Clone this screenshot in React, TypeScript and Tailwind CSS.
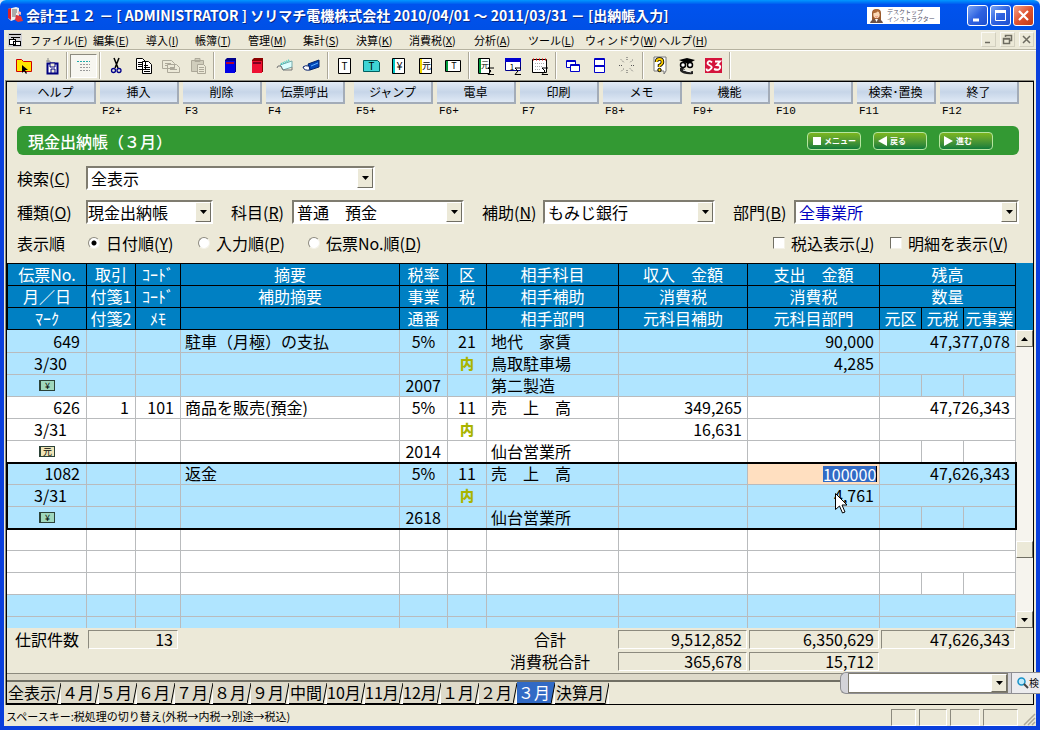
import { Fragment, type ReactNode } from "react";
import clsx from "clsx";

interface MenuEntry {
  label: string;
  accessKey: string;
  width: string;
}

interface Entry {
  no: string;
  date: string;
  mark: string;
  tag?: string;
  code?: string;
  summary: string;
  serial: string;
  kubun: string;
  account: string;
  subAccount?: string;
  department: string;
  income?: string;
  incomeTax?: string;
  expense?: string;
  expenseTax?: string;
  balance: string;
  tinted?: boolean;
  editing?: boolean;
}

const menus: MenuEntry[] = [
  { label: "ファイル", accessKey: "F", width: "w-[63px]" },
  { label: "編集", accessKey: "E", width: "w-[53px]" },
  { label: "導入", accessKey: "I", width: "w-[49px]" },
  { label: "帳簿", accessKey: "T", width: "w-[53px]" },
  { label: "管理", accessKey: "M", width: "w-[55px]" },
  { label: "集計", accessKey: "S", width: "w-[53px]" },
  { label: "決算", accessKey: "K", width: "w-[53px]" },
  { label: "消費税", accessKey: "X", width: "w-[65px]" },
  { label: "分析", accessKey: "A", width: "w-[54px]" },
  { label: "ツール", accessKey: "L", width: "w-[57px]" },
  { label: "ウィンドウ", accessKey: "W", width: "w-[74px]" },
  { label: "ヘルプ", accessKey: "H", width: "w-[53px]" },
];

const functionKeys = [
  [
    ["ヘルプ", "F1"],
    ["挿入", "F2+"],
    ["削除", "F3"],
    ["伝票呼出", "F4"],
  ],
  [
    ["ジャンプ", "F5+"],
    ["電卓", "F6+"],
    ["印刷", "F7"],
    ["メモ", "F8+"],
  ],
  [
    ["機能", "F9+"],
    ["", "F10"],
    ["検索･置換", "F11"],
    ["終了", "F12"],
  ],
];

const entries: Entry[] = [
  {
    no: "649",
    date: "3/30",
    mark: "¥",
    summary: "駐車（月極）の支払",
    serial: "2007",
    kubun: "21",
    account: "地代　家賃",
    subAccount: "鳥取駐車場",
    department: "第二製造",
    expense: "90,000",
    expenseTax: "4,285",
    balance: "47,377,078",
    tinted: true,
  },
  {
    no: "626",
    date: "3/31",
    mark: "元",
    tag: "1",
    code: "101",
    summary: "商品を販売(預金)",
    serial: "2014",
    kubun: "11",
    account: "売　上　高",
    department: "仙台営業所",
    income: "349,265",
    incomeTax: "16,631",
    balance: "47,726,343",
  },
  {
    no: "1082",
    date: "3/31",
    mark: "¥",
    summary: "返金",
    serial: "2618",
    kubun: "11",
    account: "売　上　高",
    department: "仙台営業所",
    expense: "100000",
    expenseTax: "4,761",
    balance: "47,626,343",
    tinted: true,
    editing: true,
  },
];

const months = [
  "全表示", "４月", "５月", "６月", "７月", "８月", "９月", "中間",
  "10月", "11月", "12月", "１月", "２月", "３月", "決算月",
];

const raised =
  "border border-t-white border-l-white border-r-[#716f64] border-b-[#716f64] bg-[#ece9d8]";
const sunken =
  "border border-t-[#8c8a7e] border-l-[#8c8a7e] border-r-white border-b-white";

/* ---------- title bar ---------- */

const CaptionButton = ({ label, close, children }: { label: string; close?: boolean; children: ReactNode }) => (
  <button
    aria-label={label}
    className={clsx(
      "flex h-[21px] w-[21px] items-center justify-center rounded-[3px] border border-white",
      close
        ? "bg-linear-to-br from-[#f0a088] via-[#e0532f] to-[#c03a14]"
        : "bg-linear-to-br from-[#7ba4f4] via-[#2f62e0] to-[#1c4fd0]",
    )}
  >
    <svg width="15" height="15" viewBox="0 0 15 15" stroke="#fff" fill="none">
      {children}
    </svg>
  </button>
);

const TitleBar = () => (
  <header className="flex h-[30px] items-center gap-[2px] rounded-t-md bg-linear-to-b from-[#0997ff] via-[#0053ee] via-15% to-[#0050e6] pl-[7px] pr-[6px]">
    <svg width="16" height="16" viewBox="0 0 16 16" aria-hidden="true">
      <path d="M1 2l8-2 3 1v10l-8 3-3-3z" fill="#eee" />
      <path d="M1 2l3-1v12l-3-2z" fill="#d8222a" />
      <path d="M5 3h5M5 5h5M5 7h4M5 9h5" stroke="#666" />
      <path d="M9 8l5 1 2 5-5 1-3-2z" fill="#e0363c" />
      <path d="M11 4l3 1v3l-3-1z" fill="#f7b3b3" />
    </svg>
    <h1 className="ml-px flex-1 truncate text-sm font-bold leading-5 text-white [text-shadow:1px_1px_#0a2a8a]">
      会計王１２ － [ ADMINISTRATOR ] ソリマチ電機株式会社 2010/04/01 ～ 2011/03/31 － [出納帳入力]
    </h1>
    <div className="mr-[25px] flex h-[17px] w-[73px] items-center gap-1 bg-white pl-[3px] text-[6px] leading-[7px] text-[#55556a]">
      <svg width="13" height="15" viewBox="0 0 13 15" aria-hidden="true">
        <path d="M2 12V5q0-4 4.500-4T11 5v7z" fill="#9a5a2c" />
        <ellipse cx="6.500" cy="6.500" rx="3.200" ry="3.800" fill="#fbd9b5" />
        <path d="M3 5q4 0 5-2l2 3V3L7 1 3 3z" fill="#b06a35" />
        <path d="M0 15q1-4 6.500-4T13 15z" fill="#6b5248" />
        <path d="M5 11l1.500 3L8 11z" fill="#fff" />
        <path d="M5.500 8.500q1 1 2 0" stroke="#d33" strokeWidth=".6" fill="none" />
      </svg>
      <span className="whitespace-nowrap">
        デスクトップ
        <br />
        インストラクター
      </span>
    </div>
    <CaptionButton label="最小化">
      <path d="M3 12h6" strokeWidth="3" />
    </CaptionButton>
    <CaptionButton label="最大化">
      <path d="M2.500 3v9.500h10V3" />
      <path d="M2 3.500h11" strokeWidth="3" />
    </CaptionButton>
    <CaptionButton label="閉じる" close>
      <path d="M3 3l9 9M12 3l-9 9" strokeWidth="2.200" />
    </CaptionButton>
  </header>
);

/* ---------- menu bar ---------- */

const MdiButton = ({ label, d }: { label: string; d: string }) => (
  <button
    aria-label={label}
    className="flex h-[15px] w-[15px] items-center justify-center border border-t-[#faf9f4] border-l-[#faf9f4] border-r-[#d2cfbf] border-b-[#d2cfbf]"
  >
    <svg width="11" height="11" viewBox="0 0 11 11" fill="none" stroke="#6d6b60" strokeWidth="1.500">
      <path d={d} />
    </svg>
  </button>
);

const MenuBar = () => (
  <nav className="flex h-[20px] items-center border-b border-[#b5b2a0] pl-1 pr-[2px] text-[11px] leading-4">
    <svg className="mr-[8px]" width="14" height="14" viewBox="0 0 14 14" shapeRendering="crispEdges" aria-hidden="true">
      <rect width="14" height="14" fill="#d0d0d4" />
      <path d="M1 1.500h12M3 4.500h9" stroke="#000" />
      <path d="M1.500 6.500h6v5h-6zM5.500 4v2M5.500 8.500h7v4h-7z" fill="#fff" stroke="#000" />
    </svg>
    {menus.map(({ label, accessKey, width }) => (
      <button key={label} className={clsx("whitespace-nowrap text-left", width)}>
        {label}(<u>{accessKey}</u>)
      </button>
    ))}
    <div className="ml-auto flex gap-1">
      <MdiButton label="ウィンドウを最小化" d="M2 8.500h5" />
      <MdiButton label="ウィンドウを元に戻す" d="M3.500 3V1.500h6v5H8M1.500 4.500h6v5h-6zM1 5h7" />
      <MdiButton label="ウィンドウを閉じる" d="M2 2l7 7M9 2l-7 7" />
    </div>
  </nav>
);

/* ---------- tool bar ---------- */

const glyph = (char: string, x: number, y: number, size = 10) => (
  <text x={x} y={y} fontSize={size} stroke="none" fill="#000" textAnchor="middle">
    {char}
  </text>
);

const sigma = <path d="M18 12h-6l3 3-3 3.500h6" stroke="#000" fill="none" />;

const fileIcons: Record<string, ReactNode> = {
  開く: (
    <>
      <path d="M2.500 3.500h5l2 2h8v10h-15z" fill="#ffe600" stroke="#d00000" />
      <path d="M8 9v8l2-2 2 3 1-1-2-3h3z" fill="#000" />
    </>
  ),
  保存: (
    <>
      <path d="M5 5h4v4H6M7 2v4" stroke="#888" fill="none" />
      <path d="M6.500 7.500h10v10h-10z" fill="#fff" stroke="#000080" strokeWidth="2" />
      <path d="M9 7h5v4H9zM10 13h4v4h-4z" fill="#ece9d8" stroke="#000080" />
    </>
  ),
};

const editIcons: Record<string, ReactNode> = {
  切り取り: (
    <>
      <path d="M7 2l4 10M12 2L8 12" stroke="#000" strokeWidth="1.500" />
      <circle cx="6.500" cy="14.500" r="2" fill="none" stroke="#00008b" strokeWidth="1.300" />
      <circle cx="12" cy="14.500" r="2" fill="none" stroke="#00008b" strokeWidth="1.300" />
    </>
  ),
  コピー: (
    <>
      <path d="M2.500 2.500h6l3 3v8h-9zM8.500 5.500h6l3 3v9h-9z" fill="#fff" stroke="#000" />
      <path d="M4 6.500h4M4 8.500h4M4 10.500h4M10 9.500h4M10 11.500h6M10 13.500h6M10 15.500h6" stroke="#000" />
    </>
  ),
  伝票コピー: (
    <g stroke="#aca899" fill="none">
      <path d="M1.500 4.500h9l3 3v5h-12zM6.500 8.500h9l3 3v5h-12z" fill="#ece9d8" />
      <path d="M4 7.500h6M4 9.500h3M9 11.500h5M9 13.500h7" />
    </g>
  ),
  貼り付け: (
    <g stroke="#aca899" fill="none">
      <path d="M3.500 4.500h12v11h-12zM7 2.500h5v3H7z" fill="#d0cdbc" />
      <path d="M9.500 8.500h6l2 2v7h-8z" fill="#ece9d8" />
      <path d="M11 11.500h5M11 13.500h5M11 15.500h5" />
    </g>
  ),
};

const bookIcons: Record<string, ReactNode> = {
  青帳簿: (
    <>
      <path d="M4 4l2-2h9v14h-11z" fill="#00008b" />
      <path d="M4 5h10v12H4z" fill="#0000e6" />
      <path d="M5 6h8v2H5z" fill="#b00030" />
    </>
  ),
  赤帳簿: (
    <>
      <path d="M4 4l2-2h9v14h-11z" fill="#8b0000" />
      <path d="M4 5h10v12H4z" fill="#ee1133" />
      <path d="M5 6h8v2H5z" fill="#800020" />
    </>
  ),
  付箋: (
    <>
      <path d="M5 9l12-4v6l-9 3z" fill="#dff" stroke="#7aa" />
      <path d="M6 8l9-4" stroke="#33c8c0" strokeWidth="2" strokeDasharray="1 1" />
      <path d="M2 12q0-3 4-2l2 4h9v-3" fill="none" stroke="#777" />
    </>
  ),
  付箋解除: (
    <>
      <path d="M6 8l11-4v7l-9 3z" fill="#0046b8" stroke="#00246b" />
      <path d="M1 11q2-2 6-1l1 4q-6 1-7-3z" fill="#fff" stroke="#001a66" />
      <path d="M9 10l7-3" stroke="#5fb0ff" />
    </>
  ),
};

const ledgerIcons: Record<string, ReactNode> = {
  伝票: (
    <>
      <path d="M3.500 2.500h12v15h-12z" fill="#fff" stroke="#000" />
      {glyph("T", 9.5, 14)}
    </>
  ),
  振替伝票: (
    <>
      <path d="M1.500 4.500h14l2 2v9h-16z" fill="#3fd5d5" stroke="#006060" />
      {glyph("T", 9.5, 14)}
    </>
  ),
  現金出納帳: (
    <>
      <path d="M3.500 2.500h12v15h-12z" fill="#fff" stroke="#000" />
      <path d="M4 3h2v14H4z" fill="#00c8c8" />
      {glyph("¥", 10.5, 14, 11)}
    </>
  ),
  元帳: (
    <>
      <path d="M3.500 2.500h12v15h-12z" fill="#fff" stroke="#000" />
      <path d="M4 3h2v14H4z" fill="#f0d800" />
      {glyph("元", 10.5, 13, 9)}
    </>
  ),
  簡易伝票: (
    <>
      <path d="M2.500 4.500h15v11h-15z" fill="#fff" stroke="#000" />
      <path d="M3 5h2v10H3z" fill="#009a3c" />
      {glyph("T", 11, 13, 9)}
    </>
  ),
};

const reportIcons: Record<string, ReactNode> = {
  元帳集計: (
    <>
      <path d="M2.500 2.500h11v15h-11z" fill="#fff" stroke="#000" />
      <path d="M3 3h2v14H3z" fill="#009a3c" />
      {glyph("元", 9, 12, 8)}
      {sigma}
    </>
  ),
  月次集計: (
    <>
      <path d="M2.500 3.500h15v11h-15z" fill="#fff" stroke="#00008b" />
      <path d="M2 2h16v4H2z" fill="#0000d0" />
      {glyph("1", 9, 14, 8)}
      {sigma}
    </>
  ),
  日次集計: (
    <>
      <path d="M2.500 3.500h14v13h-14z" fill="#fff" stroke="#000" />
      <path d="M3 3.500h13" stroke="#d00" strokeWidth="2" strokeDasharray="1 2" />
      <path d="M5 7.500h10M5 10.500h8M5 13.500h6" stroke="#aaa" strokeDasharray="1 1" />
      {sigma}
    </>
  ),
};

const windowIcons: Record<string, ReactNode> = {
  重ねて表示: (
    <g fill="#fff" stroke="#0000c8">
      <path d="M3.500 4.500h9v7h-9zM3 5.500h10" />
      <path d="M7.500 8.500h9v7h-9zM7 9.500h10" />
    </g>
  ),
  並べて表示: (
    <g fill="#fff" stroke="#0000c8">
      <path d="M4.500 2.500h10v7h-10zM4 3.500h11M4.500 9.500h10v7h-10zM4 10.500h11" />
    </g>
  ),
  整列: (
    <path
      d="M10 1v4M10 14v4M2 9.500h4M14 9.500h4M4 3.500l3 3M13 12.500l3 3M16 3.500l-3 3M7 12.500l-3 3"
      stroke="#555"
      strokeDasharray="1 1"
    />
  ),
};

const helpIcons: Record<string, ReactNode> = {
  ヘルプ: (
    <>
      <path d="M4 1h12v14l-2 3v-3H4z" fill="#fff" stroke="#777" />
      <path d="M6.500 6q0-3 3-3t3 3q0 2-3 3.500V11" fill="none" stroke="#000" strokeWidth="3.500" />
      <path d="M6.500 6q0-3 3-3t3 3q0 2-3 3.500V11" fill="none" stroke="#ffd000" strokeWidth="1.800" />
      <circle cx="9.500" cy="14" r="1.700" fill="#ffd000" stroke="#000" />
    </>
  ),
  相談: (
    <>
      <path d="M2 4l8-2 8 2-7 4z" fill="#000" />
      <circle cx="6" cy="9" r="2.500" fill="#fff" stroke="#000" strokeWidth="1.500" />
      <circle cx="13" cy="9" r="2.500" fill="#fff" stroke="#000" strokeWidth="1.500" />
      <path d="M3 12q4-1 5 2t8 1v3q-9 1-13-3z" fill="#222" />
      <path d="M6 14l8 2" stroke="#fff" />
    </>
  ),
  サポート: (
    <>
      <path d="M1 2h17v15H1z" fill="#d4143c" />
      <path d="M8 6.500Q5.500 4 4 6t2 3.500T6 13.500t-3.500-1M11 5.500h5l-3 3.500q4 0 3 3t-6 1" fill="none" stroke="#fff" strokeWidth="1.900" />
    </>
  ),
};

const ToolGroup = ({ icons }: { icons: Record<string, ReactNode> }) => (
  <div className="flex">
    {Object.entries(icons).map(([name, icon]) => (
      <button key={name} aria-label={name} className="flex h-6 w-[27px] items-center justify-center">
        <svg width="20" height="20" viewBox="0 0 20 20" fill="none">
          {icon}
        </svg>
      </button>
    ))}
  </div>
);

const Divider = () => (
  <div className="mx-[2px] h-[27px] w-[2px] border-l border-r border-l-[#aca899] border-r-white" />
);

const ToolBar = () => (
  <div className="flex h-[30px] items-center border-t border-white pl-[6px]">
    <ToolGroup icons={fileIcons} />
    <Divider />
    <button
      aria-label="一覧"
      className="flex h-6 w-[27px] items-center justify-center border border-t-[#8c8a7e] border-l-[#8c8a7e] border-r-white border-b-white bg-[#f7f6f0]"
    >
      <svg width="18" height="18" viewBox="0 0 18 18" fill="none">
        <path d="M2 4.500h13" stroke="#2aa" strokeDasharray="2 1" />
        <path d="M5 7.500h10M5 10.500h10M5 13.500h10" stroke="#999" strokeDasharray="2 1" />
      </svg>
    </button>
    <Divider />
    <ToolGroup icons={editIcons} />
    <Divider />
    <ToolGroup icons={bookIcons} />
    <Divider />
    <ToolGroup icons={ledgerIcons} />
    <Divider />
    <ToolGroup icons={reportIcons} />
    <Divider />
    <ToolGroup icons={windowIcons} />
    <Divider />
    <ToolGroup icons={helpIcons} />
    <Divider />
  </div>
);

/* ---------- function keys and heading ---------- */

const FunctionKeys = () => (
  <div className="mb-2 flex gap-[9px]">
    {functionKeys.map((group, i) => (
      <div key={i} className="flex flex-1 gap-1">
        {group.map(([label, key]) => (
          <div key={key} className="flex-1">
            <button
              aria-label={label || key}
              className="block h-[22px] w-full border-r-2 border-b-2 border-r-[#a3acb8] border-b-[#a3acb8] bg-linear-to-b from-[#e3ebf5] via-[#c6d5e8] to-[#dfe9f5] text-xs leading-5"
            >
              {label}
            </button>
            <div className="pl-[2px] font-['Liberation_Mono',monospace] text-[11px] leading-[14px]">{key}</div>
          </div>
        ))}
      </div>
    ))}
  </div>
);

const NavButton = ({ d, label }: { d: string; label: string }) => (
  <button className="flex h-[18px] w-[54px] items-center gap-[2px] rounded border border-[#b6e6a0] bg-linear-to-b from-[#7cb61c] to-[#0b7d3a] pl-1 text-[8px] font-bold leading-3 text-white">
    <svg width="10" height="10" viewBox="0 0 10 10" fill="#fff" aria-hidden="true">
      <path d={d} />
    </svg>
    <span className="whitespace-nowrap">{label}</span>
  </button>
);

const Heading = () => (
  <div className="flex h-[29px] items-center gap-3 rounded-md bg-[#339933] pl-[11px] pr-[26px]">
    <h2 className="flex-1 text-base font-medium leading-6 text-white">現金出納帳（３月）</h2>
    <NavButton d="M1 1h8v8H1z" label="メニュー" />
    <NavButton d="M9 0v10L0 5z" label="戻る" />
    <NavButton d="M0 0v10l9-5z" label="進む" />
  </div>
);

/* ---------- filters ---------- */

const Arrow = ({ up }: { up?: boolean }) => (
  <svg width="7" height="4" viewBox="0 0 7 4" aria-hidden="true">
    <path d={up ? "M0 4h7L3.500 0z" : "M0 0h7L3.500 4z"} />
  </svg>
);

interface ComboProps {
  id: string;
  label: string;
  value?: string;
  className: string;
  blue?: boolean;
  inset?: boolean;
}

const Combo = ({ id, label, value = "", className, blue, inset }: ComboProps) => (
  <div
    className={clsx(
      "relative h-6 border-2 border-t-[#7f7c70] border-l-[#7f7c70] border-r-white border-b-white bg-white",
      className,
    )}
  >
    <select
      id={id}
      aria-label={label}
      className={clsx(
        "block h-5 w-full appearance-none bg-white pr-4 leading-5 outline-none",
        inset ? "pl-[3px]" : "pl-0",
        blue && "text-[#0000c0]",
      )}
    >
      <option>{value}</option>
    </select>
    <span className={clsx("pointer-events-none absolute inset-y-0 right-0 flex w-4 items-center justify-center", raised)}>
      <Arrow />
    </span>
  </div>
);

const Caption = ({ htmlFor, text, accessKey, className }: { htmlFor: string; text: string; accessKey: string; className?: string }) => (
  <label htmlFor={htmlFor} className={clsx("whitespace-nowrap", className)}>
    {text}(<u>{accessKey}</u>)
  </label>
);

const Filters = () => (
  <form className="pt-[11px] pb-[9px] leading-[22px]">
    <div className="flex items-center">
      <Caption htmlFor="search" text="検索" accessKey="C" className="w-[69px]" />
      <Combo id="search" label="検索" value="全表示" className="w-[289px]" inset />
    </div>
    <div className="mt-[10px] flex items-center">
      <Caption htmlFor="kind" text="種類" accessKey="O" className="w-[69px]" />
      <Combo id="kind" label="種類" value="現金出納帳" className="w-[127px]" />
      <Caption htmlFor="account" text="科目" accessKey="R" className="ml-[18px] w-[61px]" />
      <Combo id="account" label="科目" value="普通　預金" className="w-[172px]" inset />
      <Caption htmlFor="sub" text="補助" accessKey="N" className="ml-[18px] w-[61px]" />
      <Combo id="sub" label="補助" value="もみじ銀行" className="w-[172px]" inset />
      <Caption htmlFor="dept" text="部門" accessKey="B" className="ml-[18px] w-[61px]" />
      <Combo id="dept" label="部門" value="全事業所" className="flex-1" inset blue />
    </div>
    <div className="mt-2 flex h-[22px] items-center">
      <span className="w-[71px]">表示順</span>
      {[
        ["日付順", "Y"],
        ["入力順", "P"],
        ["伝票No.順", "D"],
      ].map(([text, key], i) => (
        <div key={key} className="flex w-[110px] items-center gap-[6px]">
          <input
            id={`order-${key}`}
            type="radio"
            name="order"
            defaultChecked={i === 0}
            className="h-3 w-3 shrink-0 appearance-none rounded-full border border-t-[#8c8a7e] border-l-[#8c8a7e] border-r-[#f4f2e8] border-b-[#f4f2e8] bg-white checked:bg-[radial-gradient(circle,#000_2px,#fff_3px)]"
          />
          <Caption htmlFor={`order-${key}`} text={text} accessKey={key} />
        </div>
      ))}
      <div className="ml-auto flex items-center gap-3 pr-2">
        {[
          ["税込表示", "J", "w-[87px]"],
          ["明細を表示", "V", "w-[103px]"],
        ].map(([text, key, width]) => (
          <div key={key} className="flex items-center gap-[6px]">
            <input
              id={`show-${key}`}
              type="checkbox"
              className="h-3 w-3 shrink-0 appearance-none border border-t-[#716f64] border-l-[#716f64] border-r-[#f4f2e8] border-b-[#f4f2e8] bg-white checked:bg-black"
            />
            <Caption htmlFor={`show-${key}`} text={text} accessKey={key} className={width} />
          </div>
        ))}
      </div>
    </div>
  </form>
);

/* ---------- ledger ---------- */

const headCell = "h-[22px] border-r border-b border-black p-0 text-center font-normal leading-[21px] whitespace-nowrap";
const cell = "h-[22px] border-r border-b border-[#b9bbbd] p-0 leading-[21px] whitespace-nowrap";
const shortCell = "h-[11px] border-r border-[#b9bbbd] p-0";

const LedgerHead = () => (
  <thead className="bg-[#0080c3] text-white">
    <tr>
      <th className={clsx(headCell, "border-t border-l")}>伝票No.</th>
      <th className={clsx(headCell, "border-t")}>取引</th>
      <th className={clsx(headCell, "border-t")}>ｺｰﾄﾞ</th>
      <th className={clsx(headCell, "border-t")}>摘要</th>
      <th className={clsx(headCell, "border-t")}>税率</th>
      <th className={clsx(headCell, "border-t")}>区</th>
      <th className={clsx(headCell, "border-t")}>相手科目</th>
      <th className={clsx(headCell, "border-t")}>収入　金額</th>
      <th className={clsx(headCell, "border-t")}>支出　金額</th>
      <th colSpan={3} className={clsx(headCell, "border-t")}>残高</th>
    </tr>
    <tr>
      <th className={clsx(headCell, "border-l")}>月／日</th>
      <th className={headCell}>付箋1</th>
      <th className={headCell}>ｺｰﾄﾞ</th>
      <th className={headCell}>補助摘要</th>
      <th className={headCell}>事業</th>
      <th className={headCell}>税</th>
      <th className={headCell}>相手補助</th>
      <th className={headCell}>消費税</th>
      <th className={headCell}>消費税</th>
      <th colSpan={3} className={headCell}>数量</th>
    </tr>
    <tr>
      <th className={clsx(headCell, "border-l")}>ﾏｰｸ</th>
      <th className={headCell}>付箋2</th>
      <th className={headCell}>ﾒﾓ</th>
      <th className={headCell} />
      <th className={headCell}>通番</th>
      <th className={headCell} />
      <th className={headCell}>相手部門</th>
      <th className={headCell}>元科目補助</th>
      <th className={headCell}>元科目部門</th>
      <th className={headCell}>元区</th>
      <th className={headCell}>元税</th>
      <th className={headCell}>元事業</th>
    </tr>
  </thead>
);

const Mark = ({ char }: { char: string }) => (
  <svg className="mx-auto block" width="16" height="11" viewBox="0 0 16 11">
    <rect width="16" height="11" fill="#2b4238" />
    <rect x="2" y="1" width="13" height="9" fill={char === "¥" ? "#9fd8bd" : "#f0e6b8"} />
    <text x="8.500" y="9" fontSize="9" textAnchor="middle">
      {char}
    </text>
  </svg>
);

const Pointer = () => (
  <svg className="absolute top-[8px] right-[31px] z-10" width="13" height="21" viewBox="0 0 13 21" aria-hidden="true">
    <path d="M.5.500v16l4-3.500 3 7 2.500-1-3-7h5z" fill="#fff" stroke="#000" />
  </svg>
);

const EntryRows = ({ entry, top }: { entry: Entry; top: boolean }) => (
  <tbody
    className={clsx(
      entry.tinted ? "bg-[#b0e5ff]" : "bg-white",
      entry.editing && "relative outline-2 -outline-offset-1 outline-black",
    )}
  >
    <tr className={clsx(top && "h-[23px]")}>
      <td className={clsx(cell, "pr-[6px] text-right")}>{entry.no}</td>
      <td className={clsx(cell, "pr-[6px] text-right")}>{entry.tag}</td>
      <td className={clsx(cell, "pr-[6px] text-right")}>{entry.code}</td>
      <td className={clsx(cell, "pl-1")}>{entry.summary}</td>
      <td className={clsx(cell, "text-center")}>5%</td>
      <td className={clsx(cell, "text-center")}>{entry.kubun}</td>
      <td className={clsx(cell, "pl-1")}>{entry.account}</td>
      <td className={clsx(cell, "pr-[5px] text-right")}>{entry.income}</td>
      {entry.editing ? (
        <td className={clsx(cell, "bg-[#ffdfc0] pr-[2px]")}>
          <input
            aria-label="支出金額"
            defaultValue={entry.expense}
            className="ml-auto block h-4 w-[54px] border-r border-black bg-[#316ac5] text-right leading-4 text-white outline-none"
          />
        </td>
      ) : (
        <td className={clsx(cell, "pr-[5px] text-right")}>{entry.expense}</td>
      )}
      <td colSpan={3} className={clsx(cell, "pr-[5px] text-right")}>{entry.balance}</td>
    </tr>
    <tr>
      <td className={clsx(cell, "pl-[27px]")}>{entry.date}</td>
      <td className={cell} />
      <td className={cell} />
      <td className={cell} />
      <td className={cell} />
      <td className={clsx(cell, "text-center text-sm font-black text-[#a9b400]")}>内</td>
      <td className={clsx(cell, "pl-1")}>{entry.subAccount}</td>
      <td className={clsx(cell, "pr-[5px] text-right")}>{entry.incomeTax}</td>
      <td className={clsx(cell, "relative pr-[5px] text-right")}>
        {entry.expenseTax}
        {entry.editing && <Pointer />}
      </td>
      <td colSpan={3} className={cell} />
    </tr>
    <tr>
      <td className={cell}>
        <Mark char={entry.mark} />
      </td>
      <td className={cell} />
      <td className={cell} />
      <td className={cell} />
      <td className={clsx(cell, "pr-[6px] text-right")}>{entry.serial}</td>
      <td className={cell} />
      <td className={clsx(cell, "pl-1")}>{entry.department}</td>
      <td className={cell} />
      <td className={cell} />
      <td className={cell} />
      <td className={cell} />
      <td className={cell} />
    </tr>
  </tbody>
);

const BlankRow = ({ split, short }: { split?: boolean; short?: boolean }) => (
  <tr>
    {Array.from({ length: 9 }, (_, i) => (
      <td key={i} className={short ? shortCell : cell} />
    ))}
    {split ? (
      <>
        <td className={cell} />
        <td className={cell} />
        <td className={cell} />
      </>
    ) : (
      <td colSpan={3} className={short ? shortCell : cell} />
    )}
  </tr>
);

const Ledger = () => (
  <div className="flex">
    <table className="w-full flex-1 table-fixed border-separate border-spacing-0">
      <colgroup>
        <col className="w-[80px]" />
        <col className="w-[49px]" />
        <col className="w-[45px]" />
        <col />
        <col className="w-[48px]" />
        <col className="w-[39px]" />
        <col className="w-[132px]" />
        <col className="w-[129px]" />
        <col className="w-[132px]" />
        <col className="w-[42px]" />
        <col className="w-[42px]" />
        <col className="w-[52px]" />
      </colgroup>
      <LedgerHead />
      {entries.map((entry, i) => (
        <EntryRows key={entry.no} entry={entry} top={i === 0} />
      ))}
      <tbody className="bg-white">
        <BlankRow />
        <BlankRow />
        <BlankRow split />
      </tbody>
      <tbody className="bg-[#b0e5ff]">
        <BlankRow />
        <BlankRow short />
      </tbody>
    </table>
    <div className="flex w-[17px] flex-col bg-[#f6f4ee]">
      <div className="h-[67px] bg-[#0080c3]" />
      <button aria-label="上へ" className={clsx("flex h-[17px] items-center justify-center", raised)}>
        <Arrow up />
      </button>
      <div className="flex-1" />
      <div className={clsx("mb-[53px] h-[17px]", raised)} />
      <button aria-label="下へ" className={clsx("flex h-[17px] items-center justify-center", raised)}>
        <Arrow />
      </button>
    </div>
  </div>
);

/* ---------- totals, tabs, status ---------- */

const Total = ({ value, className }: { value?: string; className: string }) => (
  <output className={clsx("block h-[19px] pr-1 text-right leading-[17px]", value && sunken, className)}>
    {value}
  </output>
);

const Totals = () => (
  <div className="flex flex-col gap-[3px] pt-[2px] pb-[2px] pr-[18px] pl-2">
    <div className="flex gap-[2px] leading-[19px]">
      <span className="w-[71px]">仕訳件数</span>
      <Total value="13" className="w-[90px]" />
      <span className="flex-1" />
      <span className="w-[132px] text-center">合計</span>
      <Total value="9,512,852" className="w-[129px]" />
      <Total value="6,350,629" className="w-[130px]" />
      <Total value="47,626,343" className="w-[134px]" />
    </div>
    <div className="flex gap-[2px] leading-[19px]">
      <span className="flex-1" />
      <span className="w-[132px] text-center">消費税合計</span>
      <Total value="365,678" className="w-[129px]" />
      <Total value="15,712" className="w-[130px]" />
      <Total className="w-[134px]" />
    </div>
  </div>
);

const MonthTabs = () => (
  <div className="flex h-[22px]">
    {months.map((month) => {
      const active = month === "３月";
      const fill = active ? "#316ac5" : "#dedaca";
      return (
        <Fragment key={month}>
          <button
            className={clsx(
              "border-b border-black text-center leading-[21px] whitespace-nowrap",
              month.endsWith("示") || month === "決算月" ? "w-[50px]" : "w-[34px]",
              active ? "bg-[#316ac5] text-white" : "bg-[#dedaca]",
            )}
          >
            {month}
          </button>
          <svg width="4" height="22" viewBox="0 0 4 22" aria-hidden="true">
            <path d="M0 0h4L0 22z" fill={fill} />
            <path d="M4 1L0 22" stroke="#000" />
            <path d="M4 6v16H2z" fill="#fff" />
          </svg>
        </Fragment>
      );
    })}
  </div>
);

const StatusBar = () => (
  <footer className="flex h-[21px] items-end gap-[3px] pl-[2px] text-[11px]">
    <p className="flex-1 self-center leading-4">スペースキー:税処理の切り替え(外税→内税→別途→税込)</p>
    <div className={clsx("h-[17px] w-[25px]", sunken)} />
    <div className={clsx("h-[17px] w-[28px]", sunken)} />
    <div className={clsx("h-[17px] w-[30px]", sunken)} />
    <div className={clsx("h-[17px] w-[35px]", sunken)} />
    <svg className="ml-[2px]" width="13" height="13" viewBox="0 0 13 13" stroke="#aca899" strokeWidth="1.500" aria-hidden="true">
      <path d="M12 1L1 12M12 5l-7 7M12 9l-3 3" />
    </svg>
  </footer>
);

const SearchBox = () => (
  <div className="absolute right-0 bottom-[36px] flex h-[22px] w-[200px] overflow-hidden rounded-l-md border-y border-l border-[#8f8f93] bg-[#d3d3d8]">
    <div className="w-[7px] shrink-0" />
    <div className="w-[160px] shrink-0">
      <div className="relative h-5 border border-[#7f7c70] bg-white">
        <input aria-label="検索語" className="block h-full w-full pr-4 outline-none" />
        <span className={clsx("pointer-events-none absolute inset-y-0 right-0 flex w-4 items-center justify-center", raised)}>
          <Arrow />
        </span>
      </div>
    </div>
    <button className="ml-[3px] flex flex-1 items-center border-l border-[#8f8f93] bg-[#ececee] pl-[5px] text-[10px] leading-4">
      <svg className="shrink-0" width="12" height="12" viewBox="0 0 12 12" fill="none" aria-hidden="true">
        <circle cx="4.500" cy="4.500" r="3.500" fill="#bfe9fb" stroke="#1993c9" strokeWidth="1.500" />
        <path d="M7 7l4 4" stroke="#444" strokeWidth="2" />
      </svg>
      <span className="shrink-0">検</span>
    </button>
  </div>
);

const App = () => (
  <div className="relative min-h-screen overflow-hidden bg-[#d9e6f7] font-['Noto_Sans_CJK_JP',sans-serif] text-base text-black">
    <TitleBar />
    <div className="border-x-4 border-b-4 border-[#0a3fdc] bg-[#ece9d8]">
      <MenuBar />
      <ToolBar />
      <main className="mr-[2px] ml-px border-t border-l border-[#8c8a7e]">
        <div className="border border-black">
          <div className="pr-[14px] pl-[10px]">
            <FunctionKeys />
            <Heading />
            <Filters />
          </div>
          <Ledger />
          <Totals />
          <div className="h-[9px] border-t border-b-2 border-t-[#8c8a7e] border-b-[#716f64] bg-[#dedaca]" />
          <MonthTabs />
        </div>
      </main>
      <StatusBar />
    </div>
    <SearchBox />
  </div>
);

export default App;
